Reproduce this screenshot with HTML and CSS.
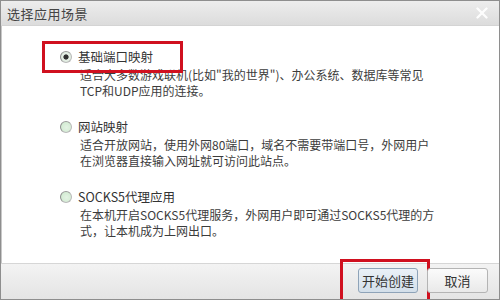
FILE: index.html
```html
<!DOCTYPE html>
<html lang="zh-CN">
<head>
<meta charset="utf-8">
<link rel="stylesheet" href="styles.css">
</head>
<body>
<div class="dialog">
  <div class="titlebar">
    <span class="title">选择应用场景</span>
    <svg class="close" width="12" height="12" viewBox="0 0 12 12"><path d="M1.5 1.5 L10.5 10.5 M10.5 1.5 L1.5 10.5" stroke="#fff" stroke-width="2.4" stroke-linecap="round"/></svg>
  </div>
  <div class="content">
    <div class="option">
      <div class="head marked"><span class="radio checked"></span><span class="label">基础端口映射</span></div>
      <div class="desc">适合大多数游戏联机(比如"我的世界")、办公系统、数据库等常见<br>TCP和UDP应用的连接。</div>
    </div>
    <div class="option">
      <div class="head"><span class="radio"></span><span class="label">网站映射</span></div>
      <div class="desc">适合开放网站，使用外网80端口，域名不需要带端口号，外网用户<br>在浏览器直接输入网址就可访问此站点。</div>
    </div>
    <div class="option">
      <div class="head"><span class="radio"></span><span class="label">SOCKS5代理应用</span></div>
      <div class="desc">在本机开启SOCKS5代理服务，外网用户即可通过SOCKS5代理的方<br>式，让本机成为上网出口。</div>
    </div>
  </div>
  <div class="footer">
    <button class="btn primary marked-btn">开始创建</button>
    <button class="btn">取消</button>
  </div>
</div>
</body>
</html>
```

FILE: styles.css
```css
* { box-sizing: border-box; }
html, body { margin: 0; padding: 0; background: #fff; }
body {
  font-family: "Noto Sans CJK SC", "DejaVu Sans", sans-serif;
  color: #3a3a3a;
  font-size: 12px;
}
.dialog {
  width: 500px;
  height: 300px;
  border: 1px solid #8e8e8e;
  box-shadow: inset 1px 0 0 #c8c8c8;
  display: flex;
  flex-direction: column;
  overflow: hidden;
}
.titlebar {
  height: 25px;
  flex: none;
  background: linear-gradient(#ededed, #dcdcdc);
  border-bottom: 1px solid #d4d4d4;
  display: flex;
  align-items: center;
  justify-content: space-between;
  padding: 0 11px 0 6px;
}
.title {
  font-size: 13px;
  color: #444;
  letter-spacing: 0.5px;
  line-height: 25px;
}
.close { display: block; opacity: 0.95; }
.content {
  flex: 1;
  padding: 15px 0 0 41px;
  display: flex;
  flex-direction: column;
  gap: 12px;
}
.head {
  display: flex;
  align-items: center;
  width: 141px;
  height: 32px;
  border: 3px solid transparent;
  padding-left: 15px;
  position: relative;
  z-index: 1;
}
.head.marked { border-color: #d0101f; }
.radio {
  width: 12px;
  height: 12px;
  border-radius: 50%;
  flex: none;
  border: 1px solid #b9b9b9;
  border-left-color: #8d8d8d;
  border-top-color: #9a9a9a;
  background: radial-gradient(circle at 55% 55%, #e4f3e4 0, #d3ebd3 70%, #c2dcc2 100%);
  margin-right: 6px;
}
.radio.checked {
  background: radial-gradient(circle, #2d2d2d 0, #333 2.2px, #e8f1e8 3px, #d3e3d3 100%);
}
.label {
  font-size: 12.5px;
  line-height: 16px;
  white-space: nowrap;
  color: #333;
}
.desc {
  margin: -6px 0 0 38px;
  line-height: 16px;
  font-size: 12px;
  white-space: nowrap;
  color: #3c3c3c;
}
.footer {
  height: 36px;
  flex: none;
  border-top: 1px solid #d6d6d6;
  background: linear-gradient(#f3f3f3, #e4e4e4);
  display: flex;
  justify-content: flex-end;
  align-items: flex-start;
  gap: 9px;
  padding: 4px 11px 0 0;
}
.btn {
  height: 25px;
  width: 61px;
  font-family: "Noto Sans CJK SC", sans-serif;
  font-size: 13px;
  color: #333;
  border: 1px solid #b4b4b4;
  border-radius: 3px;
  background: linear-gradient(#fbfbfb, #e9e9e9);
  padding: 0;
  position: relative;
}
.btn.primary {
  width: 60px;
  border-color: #8ea3b8;
  background: linear-gradient(#eaf1f7, #d3dfea);
}
.marked-btn::after {
  content: "";
  position: absolute;
  left: -19px;
  right: -13px;
  top: -10px;
  bottom: -10px;
  border: 3px solid #d0101f;
}
```
